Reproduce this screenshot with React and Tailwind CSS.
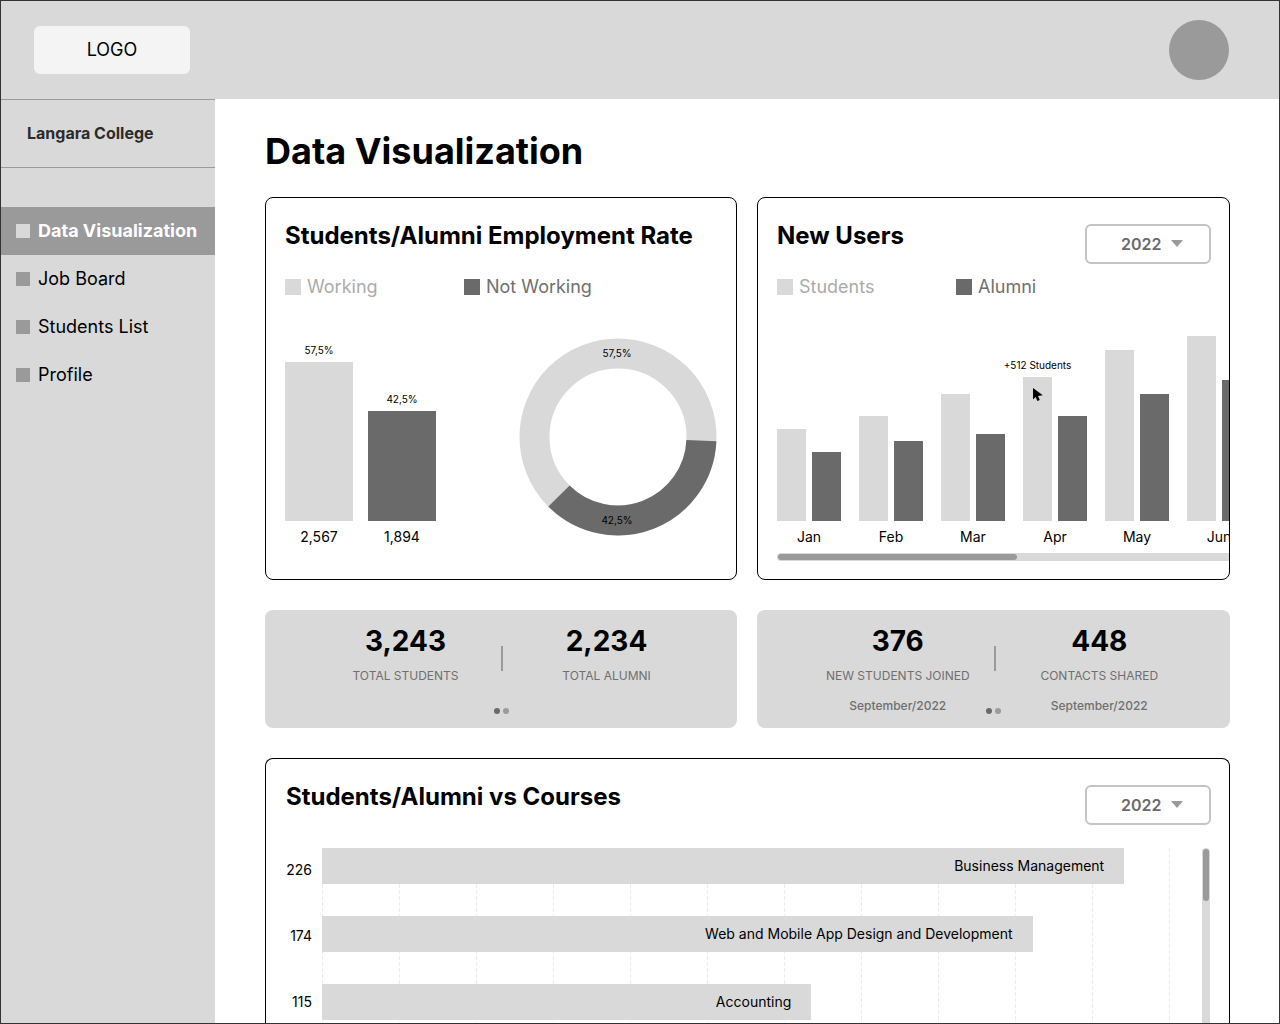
const navItems = [
  { label: "Data Visualization", href: "#data", active: true },
  { label: "Job Board", href: "#jobs" },
  { label: "Students List", href: "#students" },
  { label: "Profile", href: "#profile" },
];

const employment = [
  { share: "57,5%", total: "2,567", height: 159, color: "bg-[#d9d9d9]" },
  { share: "42,5%", total: "1,894", height: 110, color: "bg-[#6a6a6a]" },
];

const newUsers = [
  { month: "Jan", students: 92, alumni: 69 },
  { month: "Feb", students: 105, alumni: 80 },
  { month: "Mar", students: 127, alumni: 87 },
  { month: "Apr", students: 144, alumni: 105, tip: "+512 Students" },
  { month: "May", students: 171, alumni: 127 },
  { month: "Jun", students: 185, alumni: 141 },
];

// width is a percentage of the plot area
const courses = [
  { count: 226, name: "Business Management", width: 94.6 },
  { count: 174, name: "Web and Mobile App Design and Development", width: 83.8 },
  { count: 115, name: "Accounting", width: 57.7 },
];

const Legend = ({ first, second }) => (
  <ul className="mt-[21px] flex text-lg leading-7">
    <li className="flex w-[179px] items-center gap-1.5 text-[#ababab]">
      <span className="size-4 bg-[#d9d9d9]" />
      {first}
    </li>
    <li className="flex items-center gap-1.5 text-[#6f6f6f]">
      <span className="size-4 bg-[#6a6a6a]" />
      {second}
    </li>
  </ul>
);

const YearSelect = () => (
  <div className="relative">
    <select
      aria-label="Year"
      defaultValue="2022"
      className="h-10 w-[126px] appearance-none rounded-md border-2 border-[#c4c4c4] bg-white pl-[34px] text-base font-semibold text-[#6a6a6a]"
    >
      <option>2022</option>
    </select>
    <svg
      viewBox="0 0 12 7"
      className="pointer-events-none absolute top-4 right-7 h-[7px] w-3"
      fill="#9a9a9a"
    >
      <path d="M0 0h12L6 7z" />
    </svg>
  </div>
);

const Donut = () => (
  <svg viewBox="0 0 198 198" className="size-[198px]" fill="none">
    <circle cx="99" cy="99" r="83.5" stroke="#d9d9d9" strokeWidth="30" />
    <path
      d="M182.4 102.6A83.5 83.5 0 0 1 40 158"
      stroke="#6a6a6a"
      strokeWidth="30"
    />
    <g fill="#000" fontSize="10" textAnchor="middle">
      <text x="98" y="19">57,5%</text>
      <text x="98" y="186">42,5%</text>
    </g>
  </svg>
);

const StatCard = ({ items }) => (
  <section className="relative h-[118px] rounded-lg bg-[#d9d9d9]">
    <div className="grid grid-cols-[12fr_2px_13fr] pr-[27px] pl-[45px] text-center">
      <Stat {...items[0]} />
      <span className="mt-9 h-[25px] bg-[#9a9a9a]" />
      <Stat {...items[1]} />
    </div>
    <div className="absolute inset-x-0 bottom-3.5 flex justify-center gap-[3px]">
      <button aria-label="First page" className="size-1.5 rounded-full bg-[#6a6a6a]" />
      <button aria-label="Second page" className="size-1.5 rounded-full bg-[#9a9a9a]" />
    </div>
  </section>
);

const Stat = ({ value, label, period }) => (
  <div className="pt-[13px] text-xs text-[#6f6f6f]">
    <p className="text-[28px] leading-9 font-bold text-black">{value}</p>
    <p className="mt-2 leading-[18px]">{label}</p>
    {period && <p className="mt-3 leading-[18px] font-medium">{period}</p>}
  </div>
);

const App = () => {
  return (
    <div className="flex h-screen flex-col overflow-hidden border border-[#333] bg-white font-['Inter',sans-serif] text-black">
      <header className="flex h-[98px] shrink-0 items-center justify-between bg-[#d9d9d9] pr-[50px] pl-[33px]">
        <a
          href="#home"
          className="flex h-12 w-[156px] items-center justify-center rounded-md bg-[#f4f4f4] text-lg"
        >
          LOGO
        </a>
        <button aria-label="Account" className="size-15 rounded-full bg-[#9a9a9a]" />
      </header>

      <div className="flex min-h-0 flex-1">
        <aside className="w-[214px] shrink-0 bg-[#d9d9d9]">
          <p className="flex h-[69px] items-center border-y border-[#9a9a9a] pb-0.5 pl-[26px] font-bold text-[#2b2b2b]">
            Langara College
          </p>
          <nav className="mt-[39px]">
            {navItems.map((item) => (
              <a
                key={item.label}
                href={item.href}
                className={
                  "flex h-12 items-center gap-2 pl-[15px] text-lg whitespace-nowrap " +
                  (item.active ? "bg-[#9a9a9a] font-bold text-white" : "")
                }
              >
                <span
                  className={
                    "size-3.5 " + (item.active ? "bg-[#d9d9d9]" : "bg-[#9a9a9a]")
                  }
                />
                {item.label}
              </a>
            ))}
          </nav>
        </aside>

        <main className="flex min-w-0 flex-1 flex-col pt-[30px] pr-[49px] pl-[50px]">
          <h1 className="text-4xl leading-11 font-bold">Data Visualization</h1>

          <div className="mt-6 grid grid-cols-[472fr_473fr] gap-5">
            <section className="h-[383px] rounded-lg border border-black px-[19px] pt-[22px]">
              <h2 className="text-2xl font-bold whitespace-nowrap">
                Students/Alumni Employment Rate
              </h2>
              <Legend first="Working" second="Not Working" />
              <div className="mt-[37px] flex justify-between">
                <div className="flex items-end gap-[15px] pt-1">
                  {employment.map((bar) => (
                    <div key={bar.total} className="w-17 text-center">
                      <p className="text-[10px] leading-4">{bar.share}</p>
                      <div
                        className={"mt-1 " + bar.color}
                        style={{ height: bar.height }}
                      />
                      <p className="mt-1.5 text-sm">{bar.total}</p>
                    </div>
                  ))}
                </div>
                <Donut />
              </div>
            </section>

            <section className="h-[383px] overflow-hidden rounded-lg border border-black pt-[22px] pl-[19px]">
              <div className="flex h-8 items-start justify-between pr-[18px]">
                <h2 className="text-2xl font-bold">New Users</h2>
                <div className="pt-1">
                  <YearSelect />
                </div>
              </div>
              <Legend first="Students" second="Alumni" />
              <div className="mt-[35px] flex items-end gap-[18px]">
                {newUsers.map((item) => (
                  <div key={item.month} className="w-[64px] shrink-0">
                    <div className="flex items-end gap-1.5">
                      <div
                        className="relative w-[29px] bg-[#d9d9d9]"
                        style={{ height: item.students }}
                      >
                        {item.tip && (
                          <>
                            <span className="absolute bottom-full left-1/2 -translate-x-1/2 pb-1 text-[10px] leading-4 whitespace-nowrap">
                              {item.tip}
                            </span>
                            <svg
                              viewBox="0 0 10 13"
                              className="absolute top-[11px] left-2.5 h-[13px] w-2.5"
                            >
                              <path d="M0 0v11.5l2.6-2.4L4.4 13l2.4-1.1L5 8.1l4.8-.9z" />
                            </svg>
                          </>
                        )}
                      </div>
                      <div
                        className="w-[29px] bg-[#6a6a6a]"
                        style={{ height: item.alumni }}
                      />
                    </div>
                    <p className="mt-1.5 text-center text-sm">{item.month}</p>
                  </div>
                ))}
              </div>
              <div className="mt-1.5 h-2 rounded-l-full bg-[#d9d9d9] p-px">
                <div className="h-1.5 w-[53%] rounded-full bg-[#9a9a9a]" />
              </div>
            </section>
          </div>

          <div className="mt-[30px] grid grid-cols-[472fr_473fr] gap-5">
            <StatCard
              items={[
                { value: "3,243", label: "TOTAL STUDENTS" },
                { value: "2,234", label: "TOTAL ALUMNI" },
              ]}
            />
            <StatCard
              items={[
                { value: "376", label: "NEW STUDENTS JOINED", period: "September/2022" },
                { value: "448", label: "CONTACTS SHARED", period: "September/2022" },
              ]}
            />
          </div>

          <section className="mt-[30px] flex min-h-0 flex-1 flex-col overflow-hidden rounded-t-lg border border-b-0 border-black pt-[22px] pr-[18px] pl-5">
            <div className="flex items-start justify-between">
              <h2 className="text-2xl font-bold">Students/Alumni vs Courses</h2>
              <div className="pt-1">
                <YearSelect />
              </div>
            </div>
            <div className="mt-[23px] flex min-h-0 flex-1 pr-px">
              <ul className="flex w-9 shrink-0 flex-col gap-[46px] pt-3 pr-2.5 text-right text-sm">
                {courses.map((course) => (
                  <li key={course.name}>{course.count}</li>
                ))}
              </ul>
              <div className="relative mr-8 flex-1">
                <div className="absolute inset-0 flex justify-between">
                  {Array.from({ length: 12 }, (_, i) => (
                    <span
                      key={i}
                      className="w-px bg-[repeating-linear-gradient(#ececec_0_4px,#fff_4px_6px)]"
                    />
                  ))}
                </div>
                <ul className="relative flex flex-col gap-8 text-sm">
                  {courses.map((course) => (
                    <li
                      key={course.name}
                      className="flex h-9 items-center justify-end bg-[#d9d9d9] pr-5"
                      style={{ width: course.width + "%" }}
                    >
                      {course.name}
                    </li>
                  ))}
                </ul>
              </div>
              <div className="w-2 rounded-t-full bg-[#d9d9d9] p-px">
                <div className="h-[52px] w-1.5 rounded-full bg-[#9a9a9a]" />
              </div>
            </div>
          </section>
        </main>
      </div>
    </div>
  );
};

export default App;
